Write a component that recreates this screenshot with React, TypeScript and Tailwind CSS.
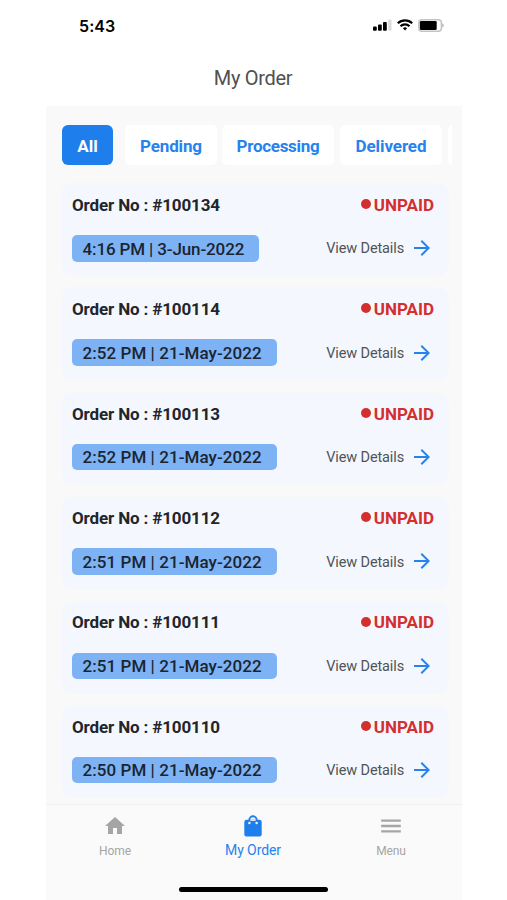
import React from 'react'
import { MdHome, MdArrowForward } from 'react-icons/md'

type Order = {
  id: string
  time: string
  chip: string
}

const orders: Order[] = [
  { id: '100134', time: '4:16 PM | 3-Jun-2022', chip: 'w-[187px] tracking-[-0.13px]' },
  { id: '100114', time: '2:52 PM | 21-May-2022', chip: 'w-[205px] tracking-[0.06px]' },
  { id: '100113', time: '2:52 PM | 21-May-2022', chip: 'w-[205px] tracking-[0.06px]' },
  { id: '100112', time: '2:51 PM | 21-May-2022', chip: 'w-[205px] tracking-[0.06px]' },
  { id: '100111', time: '2:51 PM | 21-May-2022', chip: 'w-[205px] tracking-[0.06px]' },
  { id: '100110', time: '2:50 PM | 21-May-2022', chip: 'w-[205px] tracking-[0.06px]' },
]

const StatusBar = () => (
  <div className="flex h-[50px] items-center justify-between pl-[33px] pr-[17px]">
    <span className="pt-px font-['Inter',sans-serif] text-[16px] font-semibold tracking-[0.1px] text-black">5:43</span>
    <div className="flex items-center gap-[5px]">
      <svg width="19" height="12" viewBox="0 0 19 12">
        <rect x="0" y="7.5" width="3.8" height="4.3" rx="1" fill="#000" />
        <rect x="5" y="5.6" width="3.8" height="6.2" rx="1" fill="#000" />
        <rect x="10" y="3" width="3.8" height="8.8" rx="1" fill="#000" />
        <rect x="15.2" y="0.5" width="3.3" height="11.3" rx="1" fill="#dcdcdc" />
      </svg>
      <svg width="16" height="12" viewBox="0 0 16 12" fill="none" stroke="#000" strokeWidth="2.2">
        <path d="M0.8 4.3a10.3 10.3 0 0 1 14.4 0" />
        <path d="M3.5 7.3a6.4 6.4 0 0 1 9 0" />
        <path d="M5.9 9.3a3 3 0 0 1 4.2 0L8 11.6z" fill="#000" stroke="none" />
      </svg>
      <svg width="27" height="13" viewBox="0 0 27 13">
        <rect x="0.8" y="0.8" width="22.6" height="11.4" rx="3" fill="#fff" stroke="#c4c4c4" strokeWidth="1.5" />
        <rect x="1.9" y="2" width="16.8" height="9" rx="1.3" fill="#000" />
        <path d="M24.4 4.3q2.6 2.2 0 4.4z" fill="#aaa" />
      </svg>
    </div>
  </div>
)

const BagIcon = () => (
  <svg width="24" height="24" viewBox="0 0 24 24">
    <path d="M8.3 7V6a3.7 3.7 0 0 1 7.4 0v1" fill="none" stroke="#1e7eec" strokeWidth="1.9" />
    <rect x="3.3" y="5.8" width="17.4" height="16.7" rx="2.2" fill="#1e7eec" />
    <path d="M9.3 5.8h5.4v1H9.3z" fill="#fafafa" />
    <circle cx="8.4" cy="9" r="1.2" fill="#fafafa" />
    <circle cx="15.6" cy="9" r="1.2" fill="#fafafa" />
  </svg>
)

const MenuIcon = () => (
  <svg width="24" height="24" viewBox="0 0 24 24" stroke="currentColor" strokeWidth="2.3">
    <path d="M2.2 6.7h19.6M2.2 12h19.6M2.2 17.3h19.6" />
  </svg>
)

const OrderCard = ({ order }: { order: Order }) => (
  <div className="h-[91.4px] shrink-0 rounded-[10px] bg-[#f4f8fe] pl-[10px] pr-[14px] pt-[8px] shadow-[0_0_3px_rgba(0,0,0,0.025)]">
    <div className="flex h-[26px] items-center justify-between">
      <span className="whitespace-nowrap pt-px text-[17px] font-bold tracking-[-0.14px] text-[#22252a]">
        Order No : #{order.id}
      </span>
      <span className="flex items-center gap-[3px] pt-px text-[17px] font-bold text-[#d32f2f]">
        <i className="mb-[3px] size-[10px] rounded-full bg-[#d32f2f]" />
        UNPAID
      </span>
    </div>
    <div className="mt-[17px] flex h-[26.5px] items-center justify-between">
      <span
        className={`flex h-full items-center whitespace-nowrap rounded-[5px] bg-[#7db3f5] pl-[10.5px] pt-[2px] text-[17px] font-medium text-[#1b2430] ${order.chip}`}
      >
        {order.time}
      </span>
      <span className="flex items-center gap-[6px] text-[14.5px] tracking-[-0.13px] text-[#505357]">
        <span className="pt-[2px]">View Details</span>
        <MdArrowForward className="size-[24px] text-[#2683ee]" />
      </span>
    </div>
  </div>
)

export default function App() {
  return (
    <div className="h-[900px] w-full overflow-hidden bg-white font-['Roboto','Noto_Sans',sans-serif]">
      <div className="ml-[46px] flex h-full w-[416px] flex-col">
        <StatusBar />
        <header className="flex h-[56px] items-center justify-center pr-[2px] text-[20px] tracking-[-0.3px] text-[#505050]">
          My Order
        </header>

        <main className="flex min-h-0 flex-1 flex-col overflow-hidden bg-[#f9f9f9] pl-4 pr-[14px]">
          <div className="mr-[-4px] mt-[19px] flex h-[40px] w-[390px] shrink-0 overflow-hidden text-[17px] font-bold text-[#2683ee]">
            <div className="mr-3 flex w-[51px] shrink-0 items-center justify-center rounded-[6px] bg-[#1e7eec] pt-[3px] text-white">All</div>
            <div className="mr-[5px] flex w-[92px] shrink-0 items-center justify-center rounded-[5px] bg-white pt-[3px] tracking-[-0.15px]">Pending</div>
            <div className="mr-[6px] flex w-[112px] shrink-0 items-center justify-center rounded-[5px] bg-white pt-[3px] tracking-[-0.3px]">Processing</div>
            <div className="mr-[6px] flex w-[102px] shrink-0 items-center justify-center rounded-[5px] bg-white pt-[3px] tracking-[-0.1px]">Delivered</div>
            <div className="w-[92px] shrink-0 rounded-l-[5px] bg-white" />
          </div>
          <div className="mt-[19px] flex flex-col gap-[13px]">
            {orders.map((order) => (
              <OrderCard key={order.id} order={order} />
            ))}
          </div>
        </main>

        <nav className="h-[96px] shrink-0 border-t border-[#f0f0f0] bg-[#fafafa]">
          <div className="mr-[2px] grid h-[79px] grid-cols-3 text-center">
            <div className="flex flex-col items-center pt-[9px] text-[12px] leading-[16px] text-[#a5a5a5]">
              <MdHome className="size-[24px]" />
              <span className="mt-[5px] tracking-[-0.1px]">Home</span>
            </div>
            <div className="flex flex-col items-center pt-[9px] text-[14px] leading-[18px] text-[#2683ee]">
              <BagIcon />
              <span className="mt-[3px] tracking-[-0.1px]">My Order</span>
            </div>
            <div className="flex flex-col items-center pt-[9px] text-[12px] leading-[16px] text-[#a5a5a5]">
              <MenuIcon />
              <span className="mt-[5px] tracking-[-0.1px]">Menu</span>
            </div>
          </div>
          <div className="ml-[133px] mt-[3px] h-[5px] w-[149px] rounded-full bg-black" />
        </nav>
      </div>
    </div>
  )
}
